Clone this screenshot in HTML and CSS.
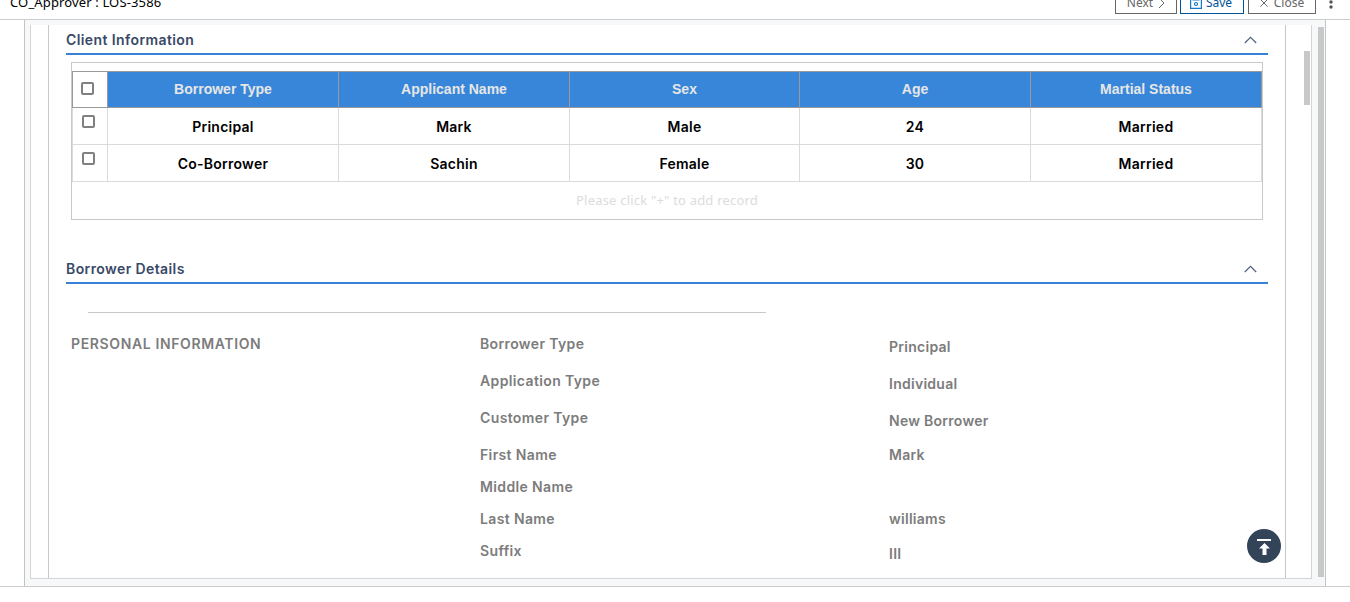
FILE: index.html
```html
<!DOCTYPE html>
<html lang="en">
<head>
<meta charset="utf-8">
<title>CO_Approver : LOS-3586</title>
<link rel="stylesheet" href="styles.css">
</head>
<body>
<header class="topbar">
  <h1 class="title">CO_Approver : LOS-3586</h1>
  <div class="actions">
    <button class="btn btn-next"><span>Next</span><svg width="7" height="12" viewBox="0 0 7 12"><path d="M1 1l5 5-5 5"/></svg></button>
    <button class="btn btn-save"><svg width="12" height="12" viewBox="0 0 12 12"><path d="M.6.6h10.8v10.8H.6zM2.5 3h7"/><circle cx="6" cy="7" r="1.5"/></svg><span>Save</span></button>
    <button class="btn btn-close"><svg width="8" height="8" viewBox="0 0 8 8"><path d="M.3.3l7.4 7.4M7.7.3L.3 7.7"/></svg><span>Close</span></button>
    <svg class="dots" width="4" height="14" viewBox="0 0 4 14"><circle cx="2" cy="2" r="1.7"/><circle cx="2" cy="7" r="1.7"/><circle cx="2" cy="12" r="1.7"/></svg>
  </div>
</header>
<main class="shell">
  <div class="frame">
    <div class="content">
      <section class="clients">
        <div class="section-head"><h2>Client Information</h2><svg class="chevron" width="13" height="8" viewBox="0 0 13 8"><path d="M.8 7l5.7-5.6L12.200 7"/></svg></div>
        <div class="grid-box">
          <div class="row row-head"><div class="cell"><i class="check"></i></div><div class="cell">Borrower Type</div><div class="cell">Applicant Name</div><div class="cell">Sex</div><div class="cell">Age</div><div class="cell">Martial Status</div></div>
          <div class="row"><div class="cell pick"><i class="check"></i></div><div class="cell">Principal</div><div class="cell">Mark</div><div class="cell">Male</div><div class="cell">24</div><div class="cell">Married</div></div>
          <div class="row"><div class="cell pick"><i class="check"></i></div><div class="cell">Co-Borrower</div><div class="cell">Sachin</div><div class="cell">Female</div><div class="cell">30</div><div class="cell">Married</div></div>
          <p class="hint">Please click "+" to add record</p>
        </div>
      </section>
      <section class="borrower">
        <div class="section-head"><h2>Borrower Details</h2><svg class="chevron" width="13" height="8" viewBox="0 0 13 8"><path d="M.8 7l5.7-5.6L12.200 7"/></svg></div>
        <div class="rule"></div>
        <div class="details">
          <h3 class="group">PERSONAL INFORMATION</h3>
          <div class="labels"><span class="tall">Borrower Type</span><span class="tall">Application Type</span><span class="tall">Customer Type</span><span>First Name</span><span>Middle Name</span><span>Last Name</span><span>Suffix</span></div>
          <div class="values"><span class="tall">Principal</span><span class="tall">Individual</span><span class="last-tall">New Borrower</span><span>Mark</span><span></span><span class="surname">williams</span><span>III</span></div>
        </div>
      </section>
    </div>
    <div class="inner-track"><div class="inner-thumb"></div></div>
  </div>
  <div class="outer-thumb"></div>
  <button class="to-top" aria-label="Back to top"><svg width="14" height="16" viewBox="0 0 14 16"><path d="M0 0h14v2H0zM7.500 4l5.500 5.500H9.500V16h-4V9.500H2z"/></svg></button>
</main>
</body>
</html>
```
FILE: styles.css
```css
* { box-sizing: border-box; }
body { margin: 0; height: 602px; overflow: hidden; background: #fff; font-family: Inter, "Liberation Sans", sans-serif; }
h1, h2, h3, p { margin: 0; }
button { margin: 0; font: inherit; }
.topbar { height: 20px; display: flex; align-items: flex-end; justify-content: space-between; overflow: hidden; border-bottom: 1px solid #ccc; padding: 0 17px 5px 10px; font-family: "Noto Sans", sans-serif; }
.title { font-size: 13px; line-height: 18px; font-weight: 400; color: #000; padding-bottom: 3px; letter-spacing: .14px; }
.actions { display: flex; align-items: flex-end; }
.btn { height: 24px; display: flex; align-items: center; justify-content: center; background: #fff; border: 1px solid #666; padding: 2px 0 0; font-size: 12px; line-height: 16px; color: #666; }
.btn svg { fill: none; stroke: currentColor; stroke-width: 1; }
.btn-next { width: 62px; gap: 5px; margin-right: 3px; }
.btn-save { width: 64px; gap: 4px; padding-right: 2px; margin-right: 4px; color: #00549a; border-color: #00549a; }
.btn-save svg { stroke: #1479c9; stroke-width: 1.2; }
.btn-close { width: 68px; gap: 6px; }
.dots { margin: 0 0 5px 13px; fill: #555; }

.shell { position: relative; height: 567px; display: flex; padding: 5px 24px 7px; border-bottom: 1px solid #ccc; }
.shell::before { content: ""; position: absolute; z-index: -1; inset: 0 24px 0 24px; background: #f7f8fa; border: solid #c4c4c4; border-width: 0 1px; }
.frame { width: 1282px; height: 554px; margin-left: 6px; display: flex; background: #fff; border: 1px solid #d2d4d6; border-top: 0; }
.content { width: 1238px; margin-left: 17px; padding: 0 17px; border: solid #c8c8c8; border-width: 0 1px; }
.inner-track { padding: 26px 0 0 18px; }
.inner-thumb { width: 6px; height: 54px; background: #c8c8c8; }
.outer-thumb { width: 6px; height: 550px; margin: 2px 0 0 6px; background: #c8c8c8; }

.section-head { width: 1202px; height: 30px; display: flex; justify-content: space-between; align-items: flex-start; padding: 6px 11px 0 0; border-bottom: 2px solid #3782d8; }
.section-head h2 { font-size: 14px; line-height: 18px; font-weight: 600; color: #384967; letter-spacing: .4px; }
.chevron { margin-top: 5px; fill: none; stroke: #52627f; stroke-width: 1.2; }
.grid-box { width: 1192px; height: 158px; margin: 7px 0 0 5px; padding-top: 8px; border: 1px solid #c9c9c9; }
.row { width: 1190px; height: 37px; display: grid; grid-template-columns: 36px 231px 231px 230px 231px 231px; border-bottom: 1px solid #dadada; }
.cell { display: flex; align-items: center; justify-content: center; border-right: 1px solid #dadada; font-size: 14px; font-weight: 600; letter-spacing: .25px; color: #000; padding: 1px 0 0; }
.cell:first-child { border-left: 1px solid #dadada; }
.row-head { border-bottom: 1px solid #999; border-top: 1px solid #999; }
.row-head .cell { background: #3886da; color: #e6e6e6; border-color: #999; padding: 0 0 1px; font-family: "Liberation Sans", sans-serif; font-weight: 700; font-size: 14px; letter-spacing: 0; }
.row-head .cell:first-child { background: #fff; padding: 0 5px 2px 0; }
.cell.pick { align-items: flex-start; padding: 7px 3px 0 0; }
.check { width: 13px; height: 13px; border: 2px solid #808080; border-radius: 2px; background: #fff; }
.hint { text-align: center; padding-top: 8px; font-family: "Noto Sans", sans-serif; font-size: 13px; line-height: 20px; color: #dcdcdc; letter-spacing: .2px; }
.borrower { margin-top: 34px; }
.rule { width: 678px; height: 1px; margin: 28px 0 0 22px; background: #c8c8c8; }
.details { display: grid; grid-template-columns: 409px 409px 1fr; margin: 20px 0 0 5px; color: #7c7c7c; font-size: 14px; line-height: 22px; font-weight: 600; letter-spacing: .37px; }
.group { font: inherit; letter-spacing: .63px; }
.labels, .values { display: flex; flex-direction: column; }
.labels span, .values span { height: 32px; }
.labels .tall, .values .tall { height: 37px; }
.values { padding-top: 3px; letter-spacing: .27px; }
.values .last-tall { height: 34px; }
.values .surname { height: 35px; }
.to-top { position: absolute; left: 1247px; top: 509px; width: 34px; height: 34px; padding: 1px 0 0; display: flex; align-items: center; justify-content: center; border: 0; border-radius: 50%; background: #334358; }
.to-top svg { fill: #fff; }
```
